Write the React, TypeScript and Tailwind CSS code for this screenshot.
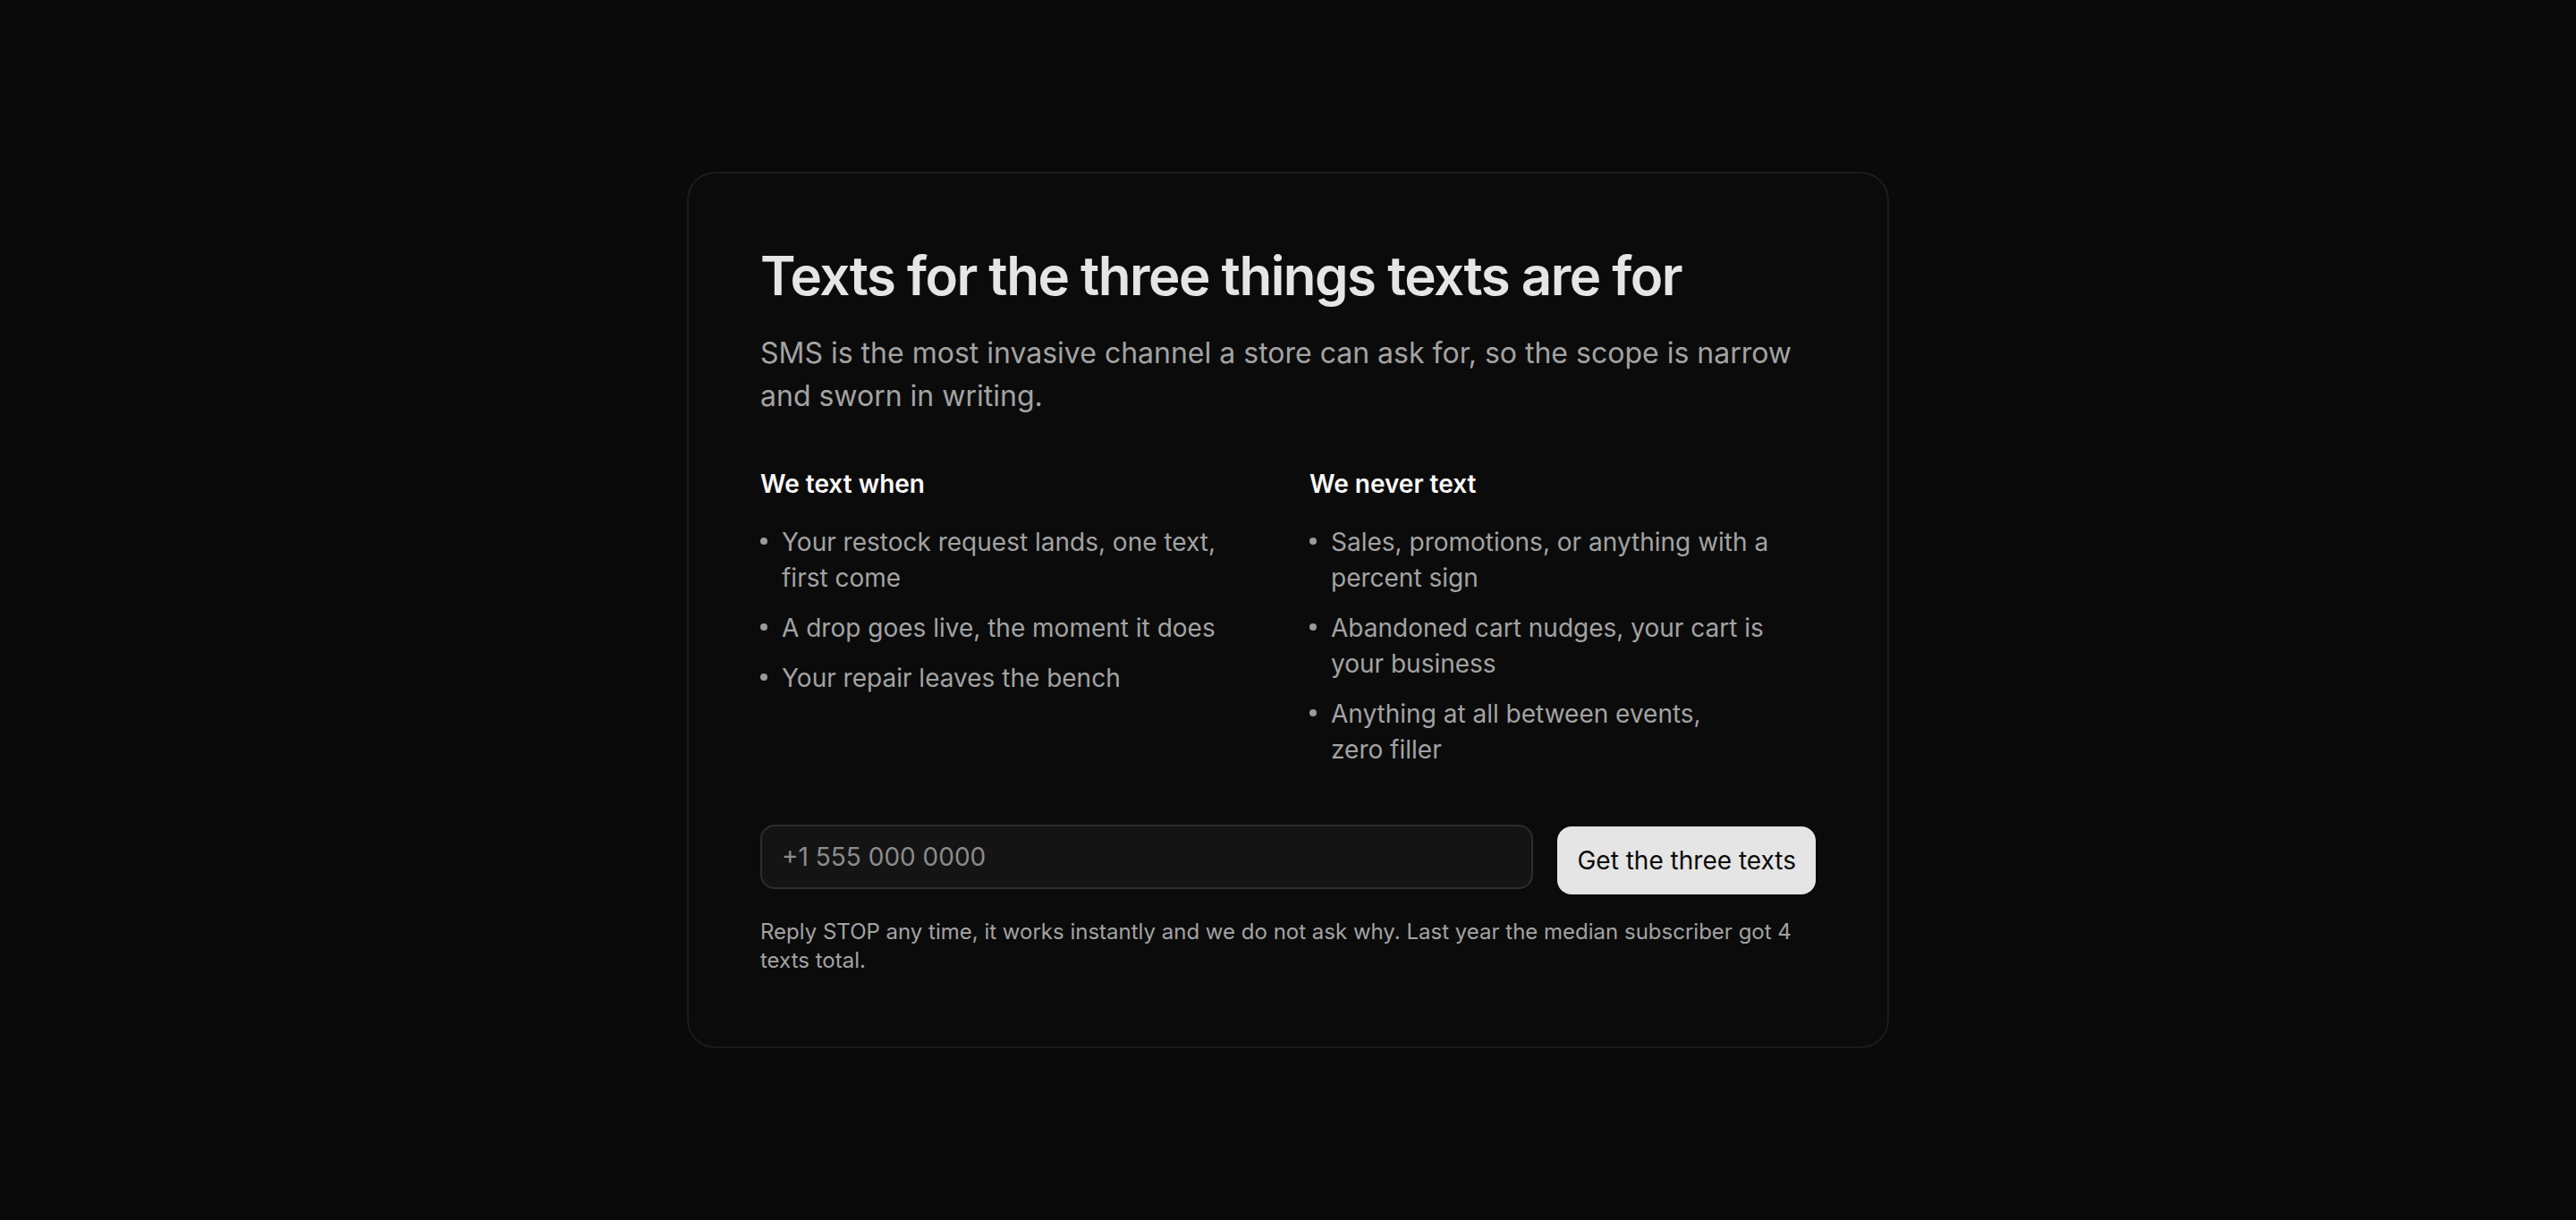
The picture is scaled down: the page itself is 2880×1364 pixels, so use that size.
const sendWhen = [
  'Your restock request lands, one text, first come',
  'A drop goes live, the moment it does',
  'Your repair leaves the bench',
];

const neverSend = [
  'Sales, promotions, or anything with a percent sign',
  'Abandoned cart nudges, your cart is your business',
  'Anything at all between events, zero filler',
];

function Column({ title, items }: { title: string; items: string[] }) {
  return (
    <div>
      <h3 className="text-[28px] leading-[40px] font-semibold text-[#fafafa]">{title}</h3>
      <ul className="mt-[25px] flex flex-col gap-4">
        {items.map((item) => (
          <li key={item} className="flex text-[28px] leading-[40px] text-[#a3a3a3]">
            <span className="w-6 shrink-0 pt-[15px]">
              <span className="block h-[8px] w-[8px] rounded-full bg-[#9a9a9a]" />
            </span>
            <span className="text-pretty">{item}</span>
          </li>
        ))}
      </ul>
    </div>
  );
}

export default function App() {
  return (
    <main
      className="min-h-screen bg-[#0a0a0a] flex items-center justify-center antialiased"
      style={{ fontFamily: 'Inter, "Noto Sans", sans-serif' }}
    >
      <section className="w-[1344px] rounded-[32px] border-2 border-[#1c1c1c] bg-[#0b0b0b] p-20">
        <h1 className="text-[60px] leading-[1.15] font-semibold tracking-tight text-[#e5e5e5]">
          Texts for the three things texts are for
        </h1>
        <p className="mt-7 text-[32px] leading-[48px] text-[#a3a3a3]">
          SMS is the most invasive channel a store can ask for, so the scope is narrow and sworn in
          writing.
        </p>

        <div className="mt-[54px] grid grid-cols-2 gap-12">
          <Column title="We text when" items={sendWhen} />
          <Column title="We never text" items={neverSend} />
        </div>

        <form className="mt-16 flex items-start gap-[27px]" onSubmit={(e) => e.preventDefault()}>
          <input
            type="tel"
            placeholder="+1 555 000 0000"
            className="h-[72px] flex-1 min-w-0 rounded-2xl border-2 border-[#2e2e2e] bg-[#141414] px-[22px] text-[28px] text-[#e5e5e5] placeholder:text-[#8c8c8c] outline-none"
          />
          <button
            type="submit"
            className="mt-[2px] h-[76px] rounded-2xl bg-[#e5e5e5] px-[22px] text-[28px] text-[#0a0a0a]"
          >
            Get the three texts
          </button>
        </form>

        <p className="mt-[26px] text-[24px] leading-[32px] text-[#a3a3a3]">
          Reply STOP any time, it works instantly and we do not ask why. Last year the median
          subscriber got 4 texts total.
        </p>
      </section>
    </main>
  );
}
